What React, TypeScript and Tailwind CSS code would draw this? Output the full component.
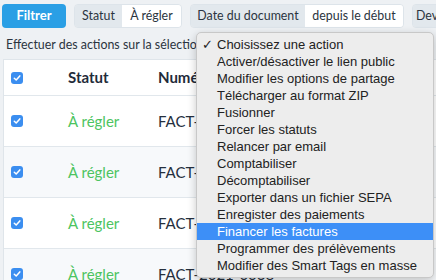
import React from "react";

const items = [
  "Choisissez une action",
  "Activer/désactiver le lien public",
  "Modifier les options de partage",
  "Télécharger au format ZIP",
  "Fusionner",
  "Forcer les statuts",
  "Relancer par email",
  "Comptabiliser",
  "Décomptabiliser",
  "Exporter dans un fichier SEPA",
  "Enregister des paiements",
  "Financer les factures",
  "Programmer des prélèvements",
  "Modifier des Smart Tags en masse",
];

function Check() {
  return (
    <span className="flex h-[12px] w-[12px] items-center justify-center rounded-[3px] bg-[#3b8ef0]">
      <svg width="8" height="8" viewBox="0 0 8 8">
        <path d="M1.3 4.2 L3.2 6 L6.8 1.9" fill="none" stroke="white" strokeWidth="1.5" strokeLinecap="round" strokeLinejoin="round" />
      </svg>
    </span>
  );
}

export default function App() {
  const rows = ["FACT-2021-0041", "FACT-2021-0040", "FACT-2021-0039", "FACT-2021-0038"];
  return (
    <div className="relative h-[280px] w-[436px] overflow-hidden bg-[#eef1f4] font-['Lato',sans-serif] text-[#2b3440]">
      <div className="flex items-center gap-2 whitespace-nowrap pl-[2px] pt-[4px] text-[12.4px]">
        <div className="flex h-6 w-[64px] shrink-0 items-center justify-center rounded-[4px] bg-[#2a9fe5] text-[13px] font-bold text-white">
          Filtrer
        </div>
        <div className="flex h-6 shrink-0 overflow-hidden rounded-[4px] border border-[#dde4ea]">
          <span className="flex w-[47px] items-center justify-center bg-[#e2e8ed]">Statut</span>
          <span className="flex w-[59px] items-center justify-center bg-white">À régler</span>
        </div>
        <div className="flex h-6 shrink-0 overflow-hidden rounded-[4px] border border-[#dde4ea]">
          <span className="flex w-[114px] items-center justify-center bg-[#e2e8ed]">Date du document</span>
          <span className="flex w-[98px] items-center justify-center bg-white">depuis le début</span>
        </div>
        <div className="flex h-6 shrink-0 overflow-hidden rounded-[4px] border border-[#dde4ea]">
          <span className="flex items-center bg-[#e2e8ed] pl-[3px] pr-[8px]">Devise</span>
        </div>
      </div>
      <div className="mt-[9px] whitespace-nowrap pl-[6px] text-[12.4px] leading-4">
        Effectuer des actions sur la sélection
      </div>
      <div className="ml-[3px] mt-[6px] border-l border-t border-[#dfe5ea] bg-white">
        <div className="grid h-[36px] grid-cols-[64px_90px_1fr] items-center border-b border-[#e1e7ec] text-[15px] font-bold text-[#1f2b3a]">
          <div className="pl-[7px]">
            <Check />
          </div>
          <div>Statut</div>
          <div className="whitespace-nowrap">Numéro</div>
        </div>
        {rows.map((r, i) => (
          <div
            key={r}
            className={`grid h-[51px] grid-cols-[64px_90px_1fr] items-center border-b border-[#e1e7ec] text-[15px] ${i % 2 === 1 ? "bg-[#f7f9fb]" : "bg-white"}`}
          >
            <div className="pl-[7px]">
              <Check />
            </div>
            <div className="text-[#4cc460]">À régler</div>
            <div className="whitespace-nowrap text-[#26303e]">{r}</div>
          </div>
        ))}
      </div>
      <div className="absolute left-[196px] top-[32px] h-[246px] w-[238px] rounded-[5px] border border-[#c8c8c8] bg-[#ededed] pt-[3px] font-['Liberation_Sans',sans-serif] text-[13px] text-[#222] shadow-[0_3px_10px_rgba(0,0,0,0.22)]">
        {items.map((t, i) => (
          <div
            key={t}
            className={`relative flex h-[17px] items-center whitespace-nowrap pl-[20px] ${i === 11 ? "bg-[#3d8ff7] text-white" : ""}`}
          >
            {i === 0 && <span className="absolute left-[5px] top-0 text-[13px] leading-[17px]">✓</span>}
            {t}
          </div>
        ))}
      </div>
    </div>
  );
}
